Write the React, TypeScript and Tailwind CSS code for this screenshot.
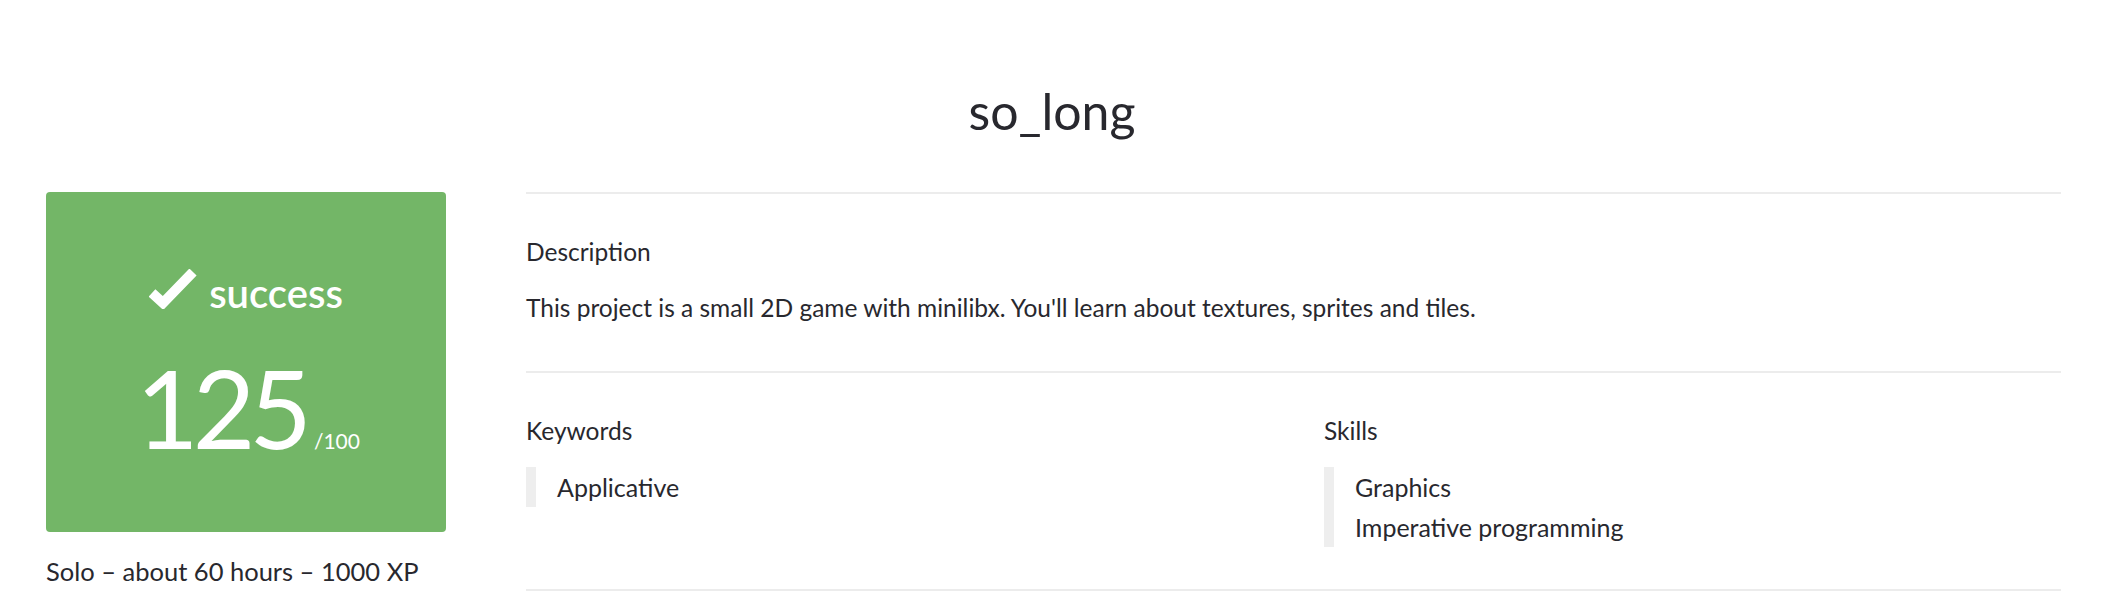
import React from "react";

function Check() {
  return (
    <svg width="48" height="40" viewBox="0 0 48 40" className="shrink-0">
      <polyline
        points="3,24 14,34 44,3"
        fill="none"
        stroke="#ffffff"
        strokeWidth="10"
        strokeLinejoin="miter"
        strokeLinecap="butt"
      />
    </svg>
  );
}

function ListBlock({ items }: { items: string[] }) {
  return (
    <div className="border-l-[10px] border-[#eeeeee] pl-[21px]">
      {items.map((t) => (
        <div key={t} className="text-[25px] leading-[40px]">
          {t}
        </div>
      ))}
    </div>
  );
}

export default function App() {
  return (
    <div className="min-h-[608px] bg-white text-[#28282e] font-['Lato',sans-serif]">
      <div className="pt-[81px] h-[192px] text-center">
        <h1 className="text-[50px] leading-[60px] font-normal">so_long</h1>
      </div>
      <div className="flex gap-[80px] pl-[46px] pr-[43px]">
        <div className="w-[400px] shrink-0">
          <div className="h-[340px] rounded-[4px] bg-[#73b667] text-white flex flex-col items-center pt-[67px]">
            <div className="flex items-end gap-[12px] h-[50px]">
              <Check />
              <span className="text-[40px] leading-[40px] font-semibold relative top-[4px]">success</span>
            </div>
            <div className="flex items-baseline mt-[43px] pl-[4px]">
              <span className="text-[108px] leading-[110px] font-normal tracking-[-6px]">125</span>
              <span className="text-[21px] ml-[8px]">/100</span>
            </div>
          </div>
          <div className="mt-[24px] text-[25.5px] leading-[30px]">Solo – about 60 hours – 1000 XP</div>
        </div>
        <div className="flex-1 min-w-0">
          <div className="border-t-2 border-[#ececec] pt-[43px] pb-[42.5px]">
            <div className="text-[24.5px] leading-[30px] mb-[21px]">Description</div>
            <div className="text-[24.5px] leading-[40px]">
              This project is a small 2D game with minilibx. You'll learn about textures, sprites and tiles.
            </div>
          </div>
          <div className="border-t-2 border-[#ececec] pt-[43px] pb-[42px] grid grid-cols-2 gap-x-[61px]">
            <div>
              <div className="text-[24.5px] leading-[30px] mb-[21px]">Keywords</div>
              <ListBlock items={["Applicative"]} />
            </div>
            <div>
              <div className="text-[24.5px] leading-[30px] mb-[21px]">Skills</div>
              <ListBlock items={["Graphics", "Imperative programming"]} />
            </div>
          </div>
          <div className="border-t-2 border-[#ececec]" />
        </div>
      </div>
    </div>
  );
}
